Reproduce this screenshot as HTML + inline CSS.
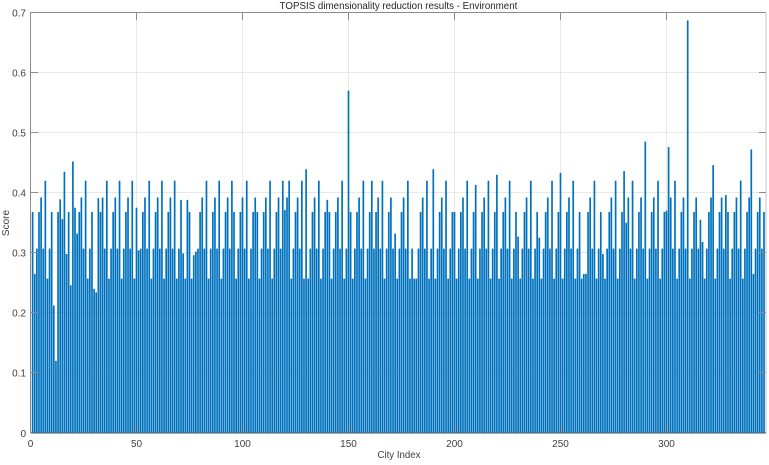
<!DOCTYPE html>
<html>
<head>
<meta charset="utf-8">
<style>
html,body{margin:0;padding:0;background:#fff;width:769px;height:465px;overflow:hidden}
svg{display:block;filter:blur(.3px)}
text{font-family:"Liberation Sans",sans-serif;font-size:10px;fill:#404040}
</style>
</head>
<body>
<svg width="769" height="465" viewBox="0 0 769 465" xmlns="http://www.w3.org/2000/svg">
<rect width="769" height="465" fill="#fff"/>
<g stroke="#e8e8e8" stroke-width="1" fill="none">
<path d="M136.5 12.5V433M242.5 12.5V433M348.5 12.5V433M454.5 12.5V433M560.5 12.5V433M666.5 12.5V433"/>
<path d="M30.5 72.5H766M30.5 132.5H766M30.5 192.5H766M30.5 252.5H766M30.5 312.5H766M30.5 372.5H766"/>
</g>
<g transform="translate(30.5,433) scale(2.12,-.6007)">
<path fill="none" stroke="#0072BD" stroke-width=".8" d="M1 0V368M2 0V265M3 0V307M4 0V368M5 0V392M6 0V307M7 0V420M8 0V257M9 0V307M10 0V368M11 0V212M12 0V120M13 0V368M14 0V389M15 0V356M16 0V435M17 0V298M18 0V368M19 0V246M20 0V452M21 0V375M22 0V332M23 0V368M24 0V392M25 0V307M26 0V420M27 0V257M28 0V307M29 0V368M30 0V240M31 0V234M32 0V391M33 0V368M34 0V392M35 0V307M36 0V420M37 0V257M38 0V307M39 0V368M40 0V392M41 0V307M42 0V420M43 0V257M44 0V307M45 0V368M46 0V392M47 0V307M48 0V420M49 0V257M50 0V375M51 0V304M52 0V307M53 0V368M54 0V392M55 0V307M56 0V420M57 0V257M58 0V307M59 0V368M60 0V392M61 0V307M62 0V420M63 0V257M64 0V307M65 0V368M66 0V392M67 0V307M68 0V420M69 0V257M70 0V307M71 0V388M72 0V299M73 0V257M74 0V388M75 0V368M76 0V257M77 0V296M78 0V302M79 0V307M80 0V368M81 0V392M82 0V307M83 0V420M84 0V257M85 0V307M86 0V368M87 0V392M88 0V307M89 0V420M90 0V257M91 0V307M92 0V368M93 0V392M94 0V307M95 0V420M96 0V368M97 0V257M98 0V307M99 0V368M100 0V392M101 0V307M102 0V420M103 0V257M104 0V307M105 0V368M106 0V392M107 0V368M108 0V257M109 0V307M110 0V368M111 0V392M112 0V307M113 0V420M114 0V257M115 0V307M116 0V368M117 0V392M118 0V307M119 0V420M120 0V371M121 0V392M122 0V420M123 0V257M124 0V307M125 0V368M126 0V392M127 0V307M128 0V420M129 0V257M130 0V439M131 0V257M132 0V307M133 0V368M134 0V392M135 0V307M136 0V420M137 0V257M138 0V307M139 0V368M140 0V388M141 0V368M142 0V257M143 0V307M144 0V368M145 0V392M146 0V307M147 0V420M148 0V257M149 0V307M150 0V570M151 0V368M152 0V257M153 0V307M154 0V368M155 0V392M156 0V307M157 0V420M158 0V257M159 0V307M160 0V368M161 0V420M162 0V307M163 0V368M164 0V392M165 0V307M166 0V420M167 0V257M168 0V307M169 0V368M170 0V392M171 0V307M172 0V332M173 0V257M174 0V307M175 0V368M176 0V392M177 0V307M178 0V420M179 0V257M180 0V307M181 0V257M182 0V257M183 0V307M184 0V368M185 0V392M186 0V307M187 0V420M188 0V257M189 0V307M190 0V439M191 0V257M192 0V307M193 0V368M194 0V392M195 0V307M196 0V420M197 0V257M198 0V307M199 0V368M200 0V368M201 0V257M202 0V307M203 0V368M204 0V392M205 0V307M206 0V420M207 0V257M208 0V307M209 0V368M210 0V413M211 0V257M212 0V307M213 0V368M214 0V392M215 0V307M216 0V420M217 0V257M218 0V307M219 0V368M220 0V430M221 0V257M222 0V307M223 0V368M224 0V392M225 0V307M226 0V420M227 0V257M228 0V307M229 0V368M230 0V327M231 0V257M232 0V307M233 0V368M234 0V392M235 0V307M236 0V420M237 0V257M238 0V307M239 0V368M240 0V325M241 0V257M242 0V307M243 0V368M244 0V392M245 0V307M246 0V420M247 0V257M248 0V307M249 0V368M250 0V433M251 0V257M252 0V307M253 0V368M254 0V392M255 0V307M256 0V420M257 0V257M258 0V307M259 0V368M260 0V257M261 0V265M262 0V265M263 0V368M264 0V392M265 0V307M266 0V420M267 0V257M268 0V307M269 0V368M270 0V298M271 0V257M272 0V307M273 0V368M274 0V392M275 0V307M276 0V420M277 0V257M278 0V307M279 0V368M280 0V436M281 0V350M282 0V392M283 0V307M284 0V420M285 0V257M286 0V307M287 0V368M288 0V392M289 0V307M290 0V485M291 0V257M292 0V307M293 0V368M294 0V392M295 0V307M296 0V420M297 0V257M298 0V307M299 0V368M300 0V370M301 0V476M302 0V392M303 0V307M304 0V420M305 0V257M306 0V307M307 0V368M308 0V392M309 0V307M310 0V687M311 0V257M312 0V307M313 0V368M314 0V392M315 0V307M316 0V355M317 0V318M318 0V257M319 0V307M320 0V368M321 0V392M322 0V446M323 0V257M324 0V307M325 0V368M326 0V392M327 0V307M328 0V396M329 0V368M330 0V257M331 0V307M332 0V368M333 0V392M334 0V307M335 0V420M336 0V257M337 0V307M338 0V368M339 0V392M340 0V472M341 0V265M342 0V307M343 0V368M344 0V392M345 0V307M346 0V368"/>
</g>
<g stroke="#8c8c8c" stroke-width="1" fill="none">
<path d="M30.5 433V12.5H766"/>
<path d="M766 12.5V433" stroke="#c4c4c4"/>
<path d="M30.5 433H766" stroke="#4a5a66"/>
<path d="M30.5 72.5H38M30.5 132.5H38M30.5 192.5H38M30.5 252.5H38M30.5 312.5H38M30.5 372.5H38"/>
<path d="M766 72.5H759M766 132.5H759M766 192.5H759M766 252.5H759M766 312.5H759M766 372.5H759"/>
<path d="M136.5 12.5V20M242.5 12.5V20M348.5 12.5V20M454.5 12.5V20M560.5 12.5V20M666.5 12.5V20"/>
<path d="M136.5 433V425.5M242.5 433V425.5M348.5 433V425.5M454.5 433V425.5M560.5 433V425.5M666.5 433V425.5" stroke="#50606c"/>
</g>
<g text-anchor="end">
<text x="26" y="16.5">0.7</text>
<text x="26" y="76.5">0.6</text>
<text x="26" y="136.5">0.5</text>
<text x="26" y="196.5">0.4</text>
<text x="26" y="256.5">0.3</text>
<text x="26" y="316.5">0.2</text>
<text x="26" y="376.5">0.1</text>
<text x="26" y="437">0</text>
</g>
<g text-anchor="middle">
<text x="30.5" y="447">0</text>
<text x="136.5" y="447">50</text>
<text x="242.5" y="447">100</text>
<text x="348.5" y="447">150</text>
<text x="454.5" y="447">200</text>
<text x="560.5" y="447">250</text>
<text x="666.5" y="447">300</text>
<text x="399" y="458" style="font-size:9.7px">City Index</text>
<text x="398.5" y="9" style="font-size:9.75px;fill:#262626">TOPSIS dimensionality reduction results - Environment</text>
<text transform="translate(9,223) rotate(-90)" style="font-size:10px">Score</text>
</g>
</svg>
</body>
</html>
